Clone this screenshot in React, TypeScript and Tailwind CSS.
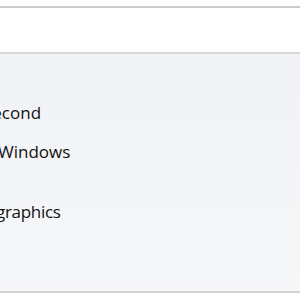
export default function App() {
  const font = { fontFamily: '"Open Sans", "Noto Sans", sans-serif' };
  return (
    <div className="w-[300px] h-[300px] bg-white overflow-hidden flex flex-col" style={font}>
      <div className="h-[6px] shrink-0 bg-white" />
      <div className="h-[2px] shrink-0 bg-[#cbcbcb]" />
      <div className="h-[44px] shrink-0 bg-white" />
      <div className="h-[2px] shrink-0 bg-[#d6d6d6]" />
      <div className="h-[237px] shrink-0 bg-gradient-to-b from-[#f1f2f5] to-[#f6f7f9] flex flex-col pt-[49px] text-[17px] leading-[20px] text-[#111111] whitespace-nowrap">
        <div className="-ml-[17px]">Second</div>
        <div className="-ml-[2px] mt-[19px]">Windows</div>
        <div className="-ml-[4px] mt-[40px] tracking-[-0.3px]">graphics</div>
      </div>
      <div className="h-[2px] shrink-0 bg-[#d2d2d2]" />
      <div className="flex-1 bg-white" />
    </div>
  );
}
